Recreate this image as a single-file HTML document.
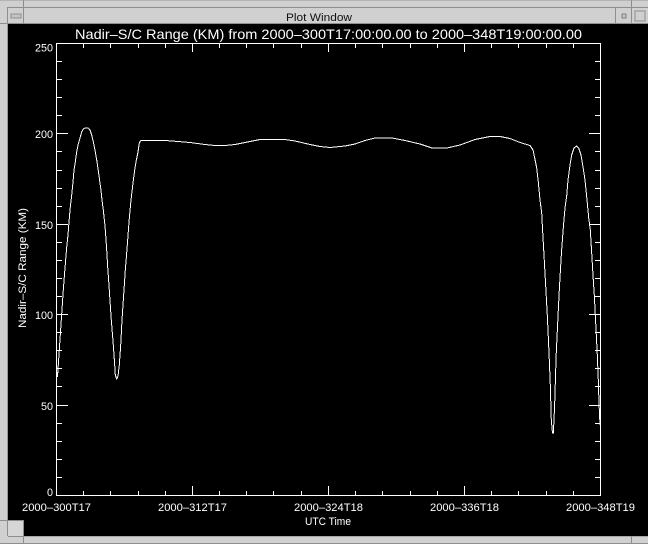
<!DOCTYPE html>
<html>
<head>
<meta charset="utf-8">
<title>Plot Window</title>
<style>
html,body{margin:0;padding:0;background:#000;width:648px;height:544px;overflow:hidden}
svg{display:block}
text{font-family:"Liberation Sans",sans-serif;fill:#fff}
</style>
</head>
<body>
<svg width="648" height="544" viewBox="0 0 648 544" xmlns="http://www.w3.org/2000/svg">
<rect width="648" height="544" fill="#000"/>
<g shape-rendering="crispEdges">
<!-- frame -->
<rect x="0" y="0" width="648" height="24" fill="#d0d0d0"/>
<rect x="0" y="0" width="8" height="544" fill="#d0d0d0"/>
<rect x="0" y="536" width="648" height="8" fill="#d0d0d0"/>
<rect x="7" y="24" width="1" height="497" fill="#9a9a9a"/>
<rect x="8" y="7" width="640" height="1" fill="#8e8e8e"/>
<rect x="0" y="0" width="648" height="1" fill="#b4b4b4"/>
<rect x="24" y="23" width="624" height="1" fill="#8e8e8e"/>
<rect x="0" y="23" width="24" height="1" fill="#8e8e8e"/>
<rect x="23" y="0" width="1" height="24" fill="#8e8e8e"/>
<rect x="7" y="7" width="1" height="17" fill="#8e8e8e"/>
<rect x="615" y="8" width="1" height="16" fill="#8e8e8e"/>
<rect x="631" y="0" width="1" height="24" fill="#8e8e8e"/>
<!-- menu button -->
<rect x="11" y="14" width="10" height="4" fill="#c4c4c4" stroke="#8e8e8e" stroke-width="1"/>
<!-- minimize -->
<rect x="622" y="14" width="4" height="4" fill="#c4c4c4" stroke="#808080" stroke-width="1"/>
<!-- maximize -->
<rect x="635" y="11" width="10" height="10" fill="#d0d0d0" stroke="#8e8e8e" stroke-width="1"/>
<!-- bottom -->
<rect x="0" y="520" width="24" height="1" fill="#8e8e8e"/>
<rect x="23" y="520" width="1" height="24" fill="#8e8e8e"/>
<rect x="8" y="521" width="15" height="15" fill="#d6d6d6"/>
<rect x="7" y="520" width="1" height="16" fill="#8e8e8e"/>
<rect x="8" y="536" width="16" height="1" fill="#8e8e8e"/>
<rect x="24" y="536" width="624" height="1" fill="#a8a8a8"/>
<rect x="0" y="543" width="648" height="1" fill="#8e8e8e"/>
<rect x="631" y="536" width="1" height="8" fill="#8e8e8e"/>
</g>
<text x="286" y="21" font-size="11" textLength="66" lengthAdjust="spacingAndGlyphs" style="fill:#111">Plot Window</text>

<!-- axes and ticks -->
<g fill="none" stroke="#fff" stroke-width="1" shape-rendering="crispEdges">
<rect x="56.5" y="43.5" width="544" height="452"/>
<path d="M83.5 44V48M110.5 44V48M138.5 44V48M165.5 44V48M192.5 44V52M219.5 44V48M246.5 44V48M273.5 44V48M301.5 44V48M328.5 44V52M355.5 44V48M382.5 44V48M410.5 44V48M437.5 44V48M464.5 44V52M491.5 44V48M518.5 44V48M546.5 44V48M573.5 44V48"/>
<path d="M83.5 495V491M110.5 495V491M138.5 495V491M165.5 495V491M192.5 495V486M219.5 495V491M246.5 495V491M273.5 495V491M301.5 495V491M328.5 495V486M355.5 495V491M382.5 495V491M410.5 495V491M437.5 495V491M464.5 495V486M491.5 495V491M518.5 495V491M546.5 495V491M573.5 495V491"/>
<path d="M57 61.5H62M57 79.5H62M57 97.5H62M57 115.5H62M57 133.5H68M57 151.5H62M57 170.5H62M57 188.5H62M57 206.5H62M57 224.5H68M57 242.5H62M57 260.5H62M57 278.5H62M57 296.5H62M57 314.5H68M57 332.5H62M57 350.5H62M57 368.5H62M57 386.5H62M57 405.5H68M57 423.5H62M57 441.5H62M57 459.5H62M57 477.5H62"/>
<path d="M600 61.5H595M600 79.5H595M600 97.5H595M600 115.5H595M600 133.5H589M600 151.5H595M600 170.5H595M600 188.5H595M600 206.5H595M600 224.5H589M600 242.5H595M600 260.5H595M600 278.5H595M600 296.5H595M600 314.5H589M600 332.5H595M600 350.5H595M600 368.5H595M600 386.5H595M600 405.5H589M600 423.5H595M600 441.5H595M600 459.5H595M600 477.5H595"/>
<!-- curve -->
<path d="M57.5 372L57.5 377L58.3 365L59.3 350L61.3 320L63.3 290L65 268L66.7 247L68 235L69 222L70.3 207L71.7 195L73 182L74 170L75.3 162L76.7 152L78 145L80 138L81.7 132L83.3 129L85 128L88.3 128L90 130L91.7 135L93.3 141.7L95.3 151.7L97 161.7L99.3 178L100.7 188L102 200L103.3 210L104.7 223L105.7 235L106.7 250L107.7 267L109.3 290L111.3 320L113.3 345L114.7 365L115.3 375L116.7 379L118 376L119.3 365L120.7 345L122 320L124 290L125.3 270L126.3 258L127.3 245L129 222L131 200L133 183L134.7 170L136 162L138 152L139.3 143L140.7 140.5L165 140.5L178 141.5L190 142.5L205 144.5L215 145.5L225 145.5L235 144.5L250 141.5L260 139.5L285 139.5L295 141L310 144.5L320 146.5L330 147.5L345 146L355 144L365 140.5L375 138L392 138L405 140.5L420 144L432 148L447 148L460 145L475 139.5L490 136.5L500 136.5L510 138.5L520 142.5L530 145.5L533 150L534.7 158L536.7 168L538.3 182L540 200L541.7 213L542.3 225L544 255L546.3 297L547.3 315L548.3 337L549.3 360L550.3 385L551.3 420L552.5 433L553.3 433L554 420L554.8 400L555.5 376L556.3 352L557.3 331L558.3 310L559.3 290L560.3 272L561.5 252L563.3 228L565 208L566.7 196L568 180L570 165L571.7 155L574 148L576.7 146L578.7 148L581 155L582.7 165L585 180L586.5 195L587.5 205L588.7 218L590.3 230L592 258L593.3 280L594.3 295L595.3 315L596.3 335L597.3 355L598.3 380L599 403L600 425"/>
</g>

<!-- title -->
<text x="75" y="39" font-size="14" textLength="507" lengthAdjust="spacingAndGlyphs">Nadir–S/C Range (KM) from 2000–300T17:00:00.00 to 2000–348T19:00:00.00</text>

<!-- y labels -->
<g font-size="11">
<text x="35" y="51.5" textLength="18" lengthAdjust="spacingAndGlyphs">250</text>
<text x="35" y="138" textLength="18" lengthAdjust="spacingAndGlyphs">200</text>
<text x="35" y="229" textLength="18" lengthAdjust="spacingAndGlyphs">150</text>
<text x="35" y="319" textLength="18" lengthAdjust="spacingAndGlyphs">100</text>
<text x="41" y="410" textLength="12" lengthAdjust="spacingAndGlyphs">50</text>
<text x="47" y="496" textLength="6" lengthAdjust="spacingAndGlyphs">0</text>
</g>

<!-- x labels -->
<g font-size="11">
<text x="22" y="511" textLength="69" lengthAdjust="spacingAndGlyphs">2000–300T17</text>
<text x="158" y="511" textLength="69" lengthAdjust="spacingAndGlyphs">2000–312T17</text>
<text x="294" y="511" textLength="69" lengthAdjust="spacingAndGlyphs">2000–324T18</text>
<text x="430" y="511" textLength="69" lengthAdjust="spacingAndGlyphs">2000–336T18</text>
<text x="566" y="511" textLength="69" lengthAdjust="spacingAndGlyphs">2000–348T19</text>
<text x="305" y="525" textLength="46" lengthAdjust="spacingAndGlyphs">UTC Time</text>
<text transform="translate(26 328) rotate(-90)" x="0" y="0" textLength="120" lengthAdjust="spacingAndGlyphs">Nadir–S/C Range (KM)</text>
</g>
</svg>
</body>
</html>
